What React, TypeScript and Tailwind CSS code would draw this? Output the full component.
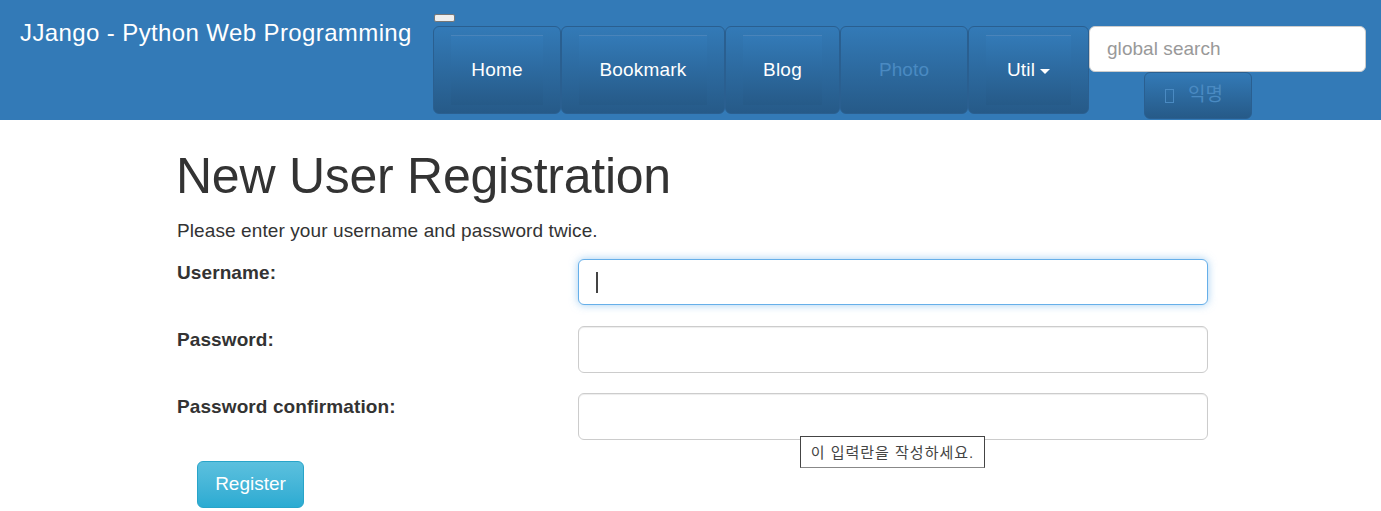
const font = { fontFamily: '"Liberation Sans", "Noto Sans CJK KR", sans-serif' };

const navBtn =
  "h-[88px] px-[17px] flex items-center rounded-md border border-[#2a5f90] bg-gradient-to-b from-[#337ab7] to-[#265a88]";

const NavItem: React.FC<{ label: string; width: string; inner: string; active?: boolean; caret?: boolean }> = ({
  label,
  width,
  inner,
  active,
  caret,
}) => (
  <div className={`${navBtn} ${width}`}>
    {active ? (
      <div className="w-full text-center text-[19px] tracking-[0.1px] text-[#4a8ac2]">{label}</div>
    ) : (
      <div
        className={`${inner} h-[70px] flex items-center justify-center text-[19px] tracking-[0.2px] text-white bg-gradient-to-b from-[#337ab7] to-[#265a88] border-t border-t-[#4a84ba]`}
      >
        {label}
        {caret && (
          <span className="ml-[5px] mt-[2px] border-x-[5px] border-t-[5px] border-x-transparent border-t-white" />
        )}
      </div>
    )}
  </div>
);

const Field: React.FC<{ label: string; focused?: boolean; mb?: string }> = ({ label, focused, mb }) => (
  <div className={`flex ${mb ?? ""}`}>
    <label className="w-[401px] pt-[1px] text-[19px] leading-[25px] tracking-[0.1px] font-bold text-[#333]">{label}</label>
    {focused ? (
      <div className="w-[630px] h-[46px] flex items-center pl-[17px] rounded-md border border-[#66afe9] bg-white shadow-[0_0_8px_rgba(102,175,233,0.6)]">
        <span className="w-[2px] h-[21px] bg-[#444]" />
      </div>
    ) : (
      <input className="w-[630px] h-[47px] rounded-md border border-[#ccc] bg-white shadow-[inset_0_1px_1px_rgba(0,0,0,0.075)]" />
    )}
  </div>
);

export default function App() {
  return (
    <div className="relative h-[511px] w-[1381px] overflow-hidden bg-white" style={font}>
      <header className="flex h-[120px] bg-[#337ab7]">
        <div className="w-[433px] pl-[20px] pt-[18px] text-[24px] leading-[30px] tracking-[0.39px] text-white">
          JJango - Python Web Programming
        </div>
        <div className="w-[656px] pt-[14px]">
          <div className="ml-[1px] h-[8px] w-[21px] rounded-[2px] border border-[#777] bg-[#efefef]" />
          <div className="mt-[4px] flex">
            <NavItem label="Home" width="w-[128px]" inner="w-[92px]" />
            <NavItem label="Bookmark" width="w-[164px]" inner="w-[128px]" />
            <NavItem label="Blog" width="w-[115px]" inner="w-[79px]" />
            <NavItem label="Photo" width="w-[128px]" inner="w-[92px]" active />
            <NavItem label="Util" width="w-[121px]" inner="w-[85px]" caret />
          </div>
        </div>
        <div className="w-[277px] pt-[26px]">
          <input
            placeholder="global search"
            className="h-[46px] w-full rounded-md border border-[#ccc] bg-white px-[17px] pb-[1px] text-[19px] tracking-[0.05px] text-[#555] placeholder:text-[#999] outline-none"
          />
          <div className="ml-[55px] flex h-[47px] w-[108px] items-center justify-center gap-[14px] rounded-md border border-[#2a5f90] bg-gradient-to-b from-[#337ab7] to-[#265a88] pr-[8px] text-[19px] text-[#4a8ac2]">
            <span className="h-[14px] w-[9px] border border-[#4a8ac2]" />
            <span>익명</span>
          </div>
        </div>
      </header>

      <main className="pl-[177px]">
        <h1 className="mt-[29px] -ml-[1px] text-[50px] leading-[55px] tracking-[-0.25px] font-normal text-[#333]">New User Registration</h1>
        <p className="mt-[14px] text-[19px] leading-[25px] tracking-[0.1px] text-[#333]">Please enter your username and password twice.</p>
        <div className="mt-[16px]">
          <Field label="Username:" focused mb="mb-[21px]" />
          <Field label="Password:" mb="mb-[20px]" />
          <Field label="Password confirmation:" mb="mb-[21px]" />
        </div>
        <button className="ml-[20px] h-[47px] w-[107px] rounded-md border border-[#28a4c9] bg-gradient-to-b from-[#5bc0de] to-[#2aabd2] text-[19px] text-white">
          Register
        </button>
      </main>

      <div className="absolute left-[800px] top-[436px] flex h-[32px] w-[185px] items-center justify-center border border-[#444] border-b-[#888] bg-white pt-[2px] text-[15px] tracking-[1px] text-[#444]">
        이 입력란을 작성하세요.
      </div>
    </div>
  );
}
